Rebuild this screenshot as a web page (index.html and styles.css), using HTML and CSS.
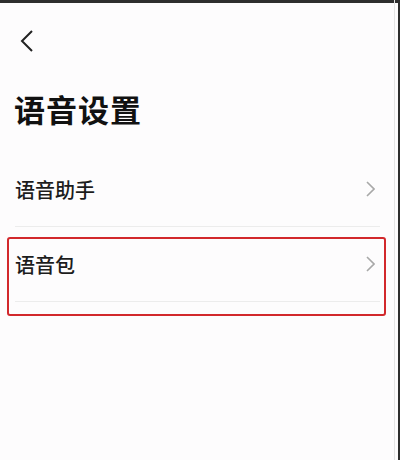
FILE: index.html
```html
<!DOCTYPE html>
<html lang="zh">
<head>
<meta charset="utf-8">
<link rel="stylesheet" href="styles.css">
</head>
<body>
<div class="screen">
  <div class="statusbar"></div>
  <div class="topbar">
    <svg class="back" width="14" height="22" viewBox="0 0 14 22"><path d="M12 1 L2 11 L12 21" fill="none" stroke="#222" stroke-width="2"/></svg>
  </div>
  <h1 class="title">语音设置</h1>
  <div class="list">
    <div class="row">
      <span class="label">语音助手</span>
      <svg class="chev" width="9" height="16" viewBox="0 0 9 16"><path d="M1 1 L8 8 L1 15" fill="none" stroke="#a8a8a8" stroke-width="1.6"/></svg>
    </div>
    <div class="row">
      <span class="label">语音包</span>
      <svg class="chev" width="9" height="16" viewBox="0 0 9 16"><path d="M1 1 L8 8 L1 15" fill="none" stroke="#a8a8a8" stroke-width="1.6"/></svg>
    </div>
    <div class="highlight"></div>
  </div>
  <div class="edge-light"></div>
  <div class="edge-dark"></div>
</div>
</body>
</html>
```
FILE: styles.css
```css
html, body {
  margin: 0;
  padding: 0;
  background: #fdfcfd;
}
.screen {
  position: relative;
  width: 400px;
  height: 460px;
  overflow: hidden;
  font-family: "Noto Sans CJK SC", "Noto Sans", sans-serif;
  color: #1a1a1a;
}
.statusbar {
  height: 3px;
  background: #2e2e2e;
}
.topbar {
  height: 58px;
  display: flex;
  align-items: flex-start;
  padding-left: 20px;
}
.back {
  margin-top: 27px;
}
.title {
  margin: 0;
  padding: 0 0 0 14px;
  font-size: 31px;
  line-height: 46px;
  font-weight: 700;
  margin-top: 25px;
  color: #111;
  letter-spacing: 1px;
}
.list {
  position: relative;
  margin-top: 20px;
  padding: 0 20px 0 15px;
}
.row {
  height: 74px;
  border-bottom: 1px solid #ececec;
  display: flex;
  align-items: center;
  justify-content: space-between;
}
.label {
  font-size: 20px;
  font-weight: 500;
  color: #1c1c1c;
}
.chev {
  margin-right: 5px;
}
.highlight {
  position: absolute;
  left: 7px;
  top: 85px;
  width: 375px;
  height: 75px;
  border: 2px solid #d2282c;
  border-radius: 3px;
}
.edge-light {
  position: absolute;
  top: 0;
  right: 5px;
  width: 1px;
  height: 460px;
  background: #e4e4e4;
}
.edge-dark {
  position: absolute;
  top: 0;
  right: 0;
  width: 2px;
  height: 460px;
  background: #2e2e2e;
}
```
